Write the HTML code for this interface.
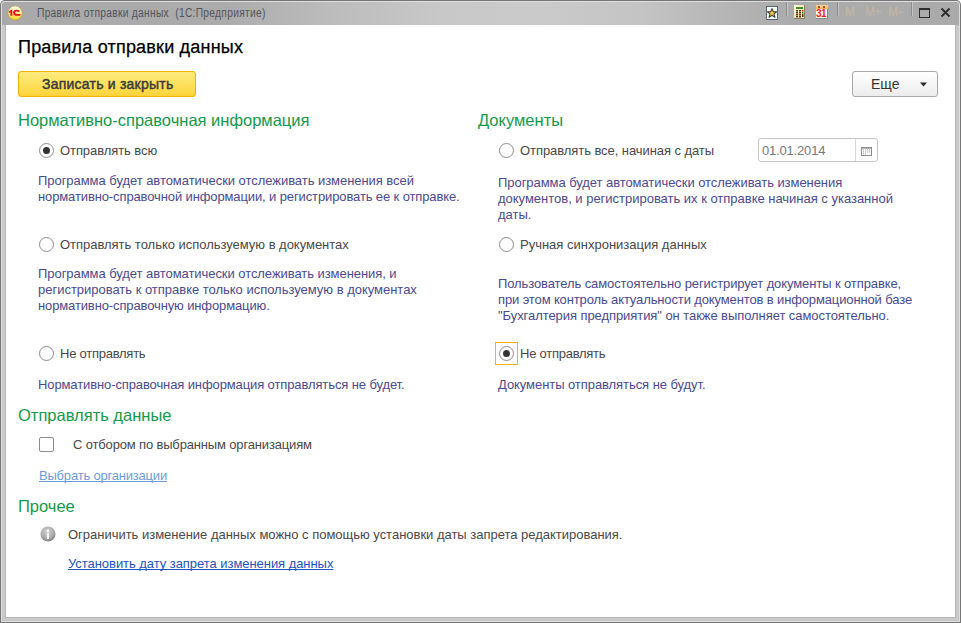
<!DOCTYPE html>
<html><head><meta charset="utf-8">
<style>
*{margin:0;padding:0;box-sizing:border-box}
html,body{width:961px;height:623px;overflow:hidden;background:#fff}
body{position:relative;font-family:"Liberation Sans",sans-serif;}
.a{position:absolute;white-space:pre}
#frame{position:absolute;left:0;top:0;width:961px;height:623px;background:#767676;border-radius:5px 5px 0 0}
#title{position:absolute;left:2px;top:2px;width:957px;height:23px;background:linear-gradient(to right,#a9a9a9 0px,#ababab 220px,#bcbcbc 330px,#c8c8c8 440px,#cacaca 540px,#c4c4c4 640px,#b6b6b6 720px,#ababab 790px,#aaaaaa 957px);border-radius:3px 3px 0 0}
#content{position:absolute;left:6px;top:25px;width:949px;height:592px;background:#fff}
.t13{font-size:13px;line-height:16px;color:#484848}
.desc{font-size:13px;line-height:16px;color:#4a4a8e}
.date{font-size:13px;line-height:16px;color:#777}
.btn{font-size:14px;line-height:16px;color:#3a3a3a;-webkit-text-stroke:0.45px #3a3a3a}
.lnk1{font-size:13px;line-height:16px;text-decoration:underline;text-decoration-skip-ink:none;color:#6f9ad8}
.lnk2{font-size:13px;line-height:16px;text-decoration:underline;text-decoration-skip-ink:none;color:#2553c0}
.hdr{font-size:16.5px;line-height:20px;color:#14994b}
.radio{position:absolute;width:15px;height:15px;border:1px solid #8c8c8c;border-radius:50%;background:#fff}
.radio.on::after{content:"";position:absolute;left:3px;top:3px;width:7px;height:7px;border-radius:50%;background:#333}
</style></head><body>
<div id="frame"></div>
<div class="a" style="left:1px;top:1px;width:959px;height:621px;background:#dedede;border-radius:4px 4px 0 0"></div>
<div class="a" style="left:2px;top:2px;width:957px;height:619px;background:#c9c9c9;border-radius:3px 3px 0 0"></div>
<div class="a" style="left:5px;top:24px;width:951px;height:594px;background:#b6b6b6"></div>
<div id="content"></div>
<div id="title"></div>

<!-- title bar -->
<svg class="a" style="left:7px;top:5px" width="16" height="16" viewBox="0 0 16 16">
<defs><linearGradient id="lg" x1="0" y1="0" x2="0" y2="1"><stop offset="0" stop-color="#fffbe8"/><stop offset="0.45" stop-color="#fff3a0"/><stop offset="1" stop-color="#f2d21a"/></linearGradient></defs>
<circle cx="8.1" cy="8" r="7.2" fill="url(#lg)" stroke="#b89a5a" stroke-width="0.8"/>
<path d="M1.9 6.4 L4.2 4.8 L5.3 4.8 L5.3 10.7 L3.4 10.7 L3.4 7.2 L1.9 8 Z" fill="#e4101c"/>
<path d="M10.4 4.9 C8 4.5 5.9 5.6 6.1 8 C6.3 10 8 10.8 9.8 10.8 L13.4 10.8 L13.4 9 L9.9 9 C8.8 9 8.1 8.6 8.1 7.8 C8.1 6.8 9.2 6.4 10.2 6.6 L11.1 6.9 L12.4 6.9 L12.4 5.3 Z" fill="#e4101c"/>
</svg>
<div class="a" style="left:37px;top:6px;font-size:12px;line-height:15px;color:#54545e;letter-spacing:0.35px;transform:scaleX(0.851);transform-origin:0 0">Правила отправки данных  (1С:Предприятие)</div>

<!-- favorites doc -->
<div class="a" style="left:766px;top:6px;width:12px;height:14px;border:1px solid #56666c;background:#f2fbfb"></div>
<svg class="a" style="left:767px;top:8px" width="10" height="10" viewBox="0 0 10 10"><path d="M5 0.6 L6.3 3.6 L9.5 3.8 L7 5.9 L7.9 9.2 L5 7.4 L2.1 9.2 L3 5.9 L0.5 3.8 L3.7 3.6 Z" fill="#f2c84a" stroke="#3c3c30" stroke-width="1.1" stroke-linejoin="round"/></svg>
<div class="a" style="left:786px;top:2px;width:1px;height:14px;background:#8c8c8c"></div>
<div class="a" style="left:787px;top:2px;width:1px;height:14px;background:#c4c4c4"></div>
<!-- calculator -->
<div class="a" style="left:794px;top:5px;width:11px;height:14px;background:linear-gradient(135deg,#fff6d8,#f3d99c);border-right:1px solid #8a8066;border-bottom:1px solid #8a8066"></div>
<div class="a" style="left:796px;top:7px;width:7px;height:2px;background:#3f8f22"></div>
<svg class="a" style="left:795px;top:9px" width="10" height="9" viewBox="0 0 10 9">
<g fill="#5a3a20"><rect x="1" y="1" width="2" height="1.5"/><rect x="4" y="1" width="2" height="1.5"/><rect x="1" y="3" width="2" height="1.5"/><rect x="4" y="3" width="2" height="1.5"/><rect x="1" y="5" width="2" height="1.5"/><rect x="4" y="5" width="2" height="1.5"/><rect x="1" y="7" width="2" height="1.5"/><rect x="4" y="7" width="2" height="1.5"/><rect x="7" y="5" width="1.5" height="3"/></g>
<rect x="7" y="1" width="1.5" height="1.5" fill="#d82020"/><rect x="7" y="3" width="1.5" height="1.5" fill="#2a8a2a"/></svg>
<!-- calendar -->
<div class="a" style="left:816px;top:5px;width:12px;height:14px;background:#fffaf0;border-right:1px solid #7f8a8a;border-bottom:1px solid #7f8a8a"></div>
<div class="a" style="left:816px;top:5px;width:12px;height:4px;background:linear-gradient(#ffd9a0,#f7a850)"></div>
<div class="a" style="left:818px;top:6px;width:2px;height:2px;background:#6a3a1a;border-radius:1px"></div>
<div class="a" style="left:823px;top:6px;width:2px;height:2px;background:#6a3a1a;border-radius:1px"></div>
<div class="a" style="left:816px;top:8px;font-size:10px;line-height:11px;font-weight:bold;color:#e8231c;letter-spacing:-0.6px">31</div>
<div class="a" style="left:837px;top:2px;width:1px;height:14px;background:#8c8c8c"></div>
<div class="a" style="left:838px;top:2px;width:1px;height:14px;background:#c4c4c4"></div>
<div class="a" style="left:845px;top:6px;font-size:12px;line-height:13px;color:#c2b5a6;-webkit-text-stroke:0.3px #c2b5a6">M</div>
<div class="a" style="left:865px;top:6px;font-size:12px;line-height:13px;color:#c2b5a6;-webkit-text-stroke:0.3px #c2b5a6;letter-spacing:-0.5px">M+</div>
<div class="a" style="left:888px;top:6px;font-size:12px;line-height:13px;color:#c2b5a6;-webkit-text-stroke:0.3px #c2b5a6;letter-spacing:-0.5px">M−</div>
<div class="a" style="left:911px;top:2px;width:1px;height:14px;background:#8c8c8c"></div>
<div class="a" style="left:912px;top:2px;width:1px;height:14px;background:#c4c4c4"></div>
<!-- maximize / close -->
<div class="a" style="left:919px;top:8px;width:11px;height:10px;border:1.5px solid #2e2e2e;border-top-width:2px"></div>
<svg class="a" style="left:940px;top:7px" width="11" height="11" viewBox="0 0 11 11"><path d="M1.5 1.5 L9.5 9.5 M9.5 1.5 L1.5 9.5" stroke="#2e2e2e" stroke-width="2"/></svg>

<!-- heading -->
<div class="a" style="left:18px;top:37px;font-size:18px;line-height:21px;color:#000;letter-spacing:0.2px;-webkit-text-stroke:0.25px #000">Правила отправки данных</div>

<!-- buttons -->
<div class="a" style="left:18px;top:71px;width:178px;height:26px;border:1px solid #f0b400;border-radius:3px;background:linear-gradient(#feeb7e,#fde262 45%,#fcd844 85%,#fad03a)"></div>
<div class="a" style="left:852px;top:71px;width:86px;height:26px;border:1px solid #a9a9a9;border-radius:3px;background:linear-gradient(#ffffff,#ececec)"></div>
<div class="a" style="left:871px;top:76px;font-size:14px;line-height:16px;color:#333">Еще</div>
<svg class="a" style="left:920px;top:82px" width="7" height="5" viewBox="0 0 7 5"><path d="M0 0.5 H7 L3.5 4.5 Z" fill="#2a2a2a"/></svg>

<!-- headers -->
<div class="a hdr" style="left:18px;top:110px">Нормативно-справочная информация</div>
<div class="a hdr" style="left:478px;top:110px">Документы</div>
<div class="a hdr" style="left:18px;top:405px">Отправлять данные</div>
<div class="a hdr" style="left:18px;top:496px">Прочее</div>

<!-- controls -->
<div class="radio on" style="left:39px;top:143px"></div>
<div class="radio" style="left:39px;top:237px"></div>
<div class="radio" style="left:39px;top:346px"></div>
<div class="a" style="left:39px;top:437px;width:15px;height:15px;border:1px solid #8c8c8c;border-radius:2px;background:#fff"></div>
<svg class="a" style="left:40px;top:526px" width="16" height="16" viewBox="0 0 16 16"><defs><radialGradient id="ig" cx="0.45" cy="0.35" r="0.65"><stop offset="0" stop-color="#d4d4d4"/><stop offset="0.7" stop-color="#a8a8a8"/><stop offset="1" stop-color="#7c7c7c"/></radialGradient></defs>
<circle cx="8" cy="8" r="7.5" fill="url(#ig)"/><rect x="6.8" y="3.6" width="2.3" height="2.2" fill="#fff"/><rect x="6.9" y="7.1" width="2.2" height="6" fill="#fff"/></svg>

<div class="radio" style="left:499px;top:143px"></div>
<div class="a" style="left:758px;top:138px;width:120px;height:24px;border:1px solid #c4c4c4;border-radius:3px;background:#fff"></div>
<div class="a" style="left:855px;top:139px;width:1px;height:22px;background:#d8d8d8"></div>
<svg class="a" style="left:861px;top:147px" width="11" height="9" viewBox="0 0 11 9"><rect x="0.5" y="0.5" width="10" height="8" fill="#fff" stroke="#8a8a8a"/><rect x="0" y="0" width="11" height="1.6" fill="#8a8a8a"/>
<g fill="#9a9a9a"><rect x="2" y="2.4" width="1" height="1"/><rect x="4" y="2.4" width="1" height="1"/><rect x="6" y="2.4" width="1" height="1"/><rect x="8" y="2.4" width="1" height="1"/><rect x="2" y="4.4" width="1" height="1"/><rect x="4" y="4.4" width="1" height="1"/><rect x="6" y="4.4" width="1" height="1"/><rect x="8" y="4.4" width="1" height="1"/><rect x="2" y="6.4" width="1" height="1"/><rect x="4" y="6.4" width="1" height="1"/></g></svg>
<div class="radio" style="left:499px;top:237px"></div>
<div class="a" style="left:495px;top:342px;width:23px;height:23px;border:1px solid #f5b400"></div>
<div class="radio on" style="left:499px;top:346px"></div>

<div class="a t13" id="l1" style="left:60px;top:143px;letter-spacing:-0.077px">Отправлять всю</div>
<div class="a desc" id="l2" style="left:38px;top:173px;letter-spacing:-0.046px">Программа будет автоматически отслеживать изменения всей</div>
<div class="a desc" id="l3" style="left:38px;top:189px;letter-spacing:-0.118px">нормативно-справочной информации, и регистрировать ее к отправке.</div>
<div class="a t13" id="l4" style="left:60px;top:237px;letter-spacing:-0.024px">Отправлять только используемую в документах</div>
<div class="a desc" id="l5" style="left:38px;top:266px;letter-spacing:-0.057px">Программа будет автоматически отслеживать изменения, и</div>
<div class="a desc" id="l6" style="left:38px;top:282px;letter-spacing:-0.017px">регистрировать к отправке только используемую в документах</div>
<div class="a desc" id="l7" style="left:38px;top:298px;letter-spacing:-0.124px">нормативно-справочную информацию.</div>
<div class="a t13" id="l8" style="left:60px;top:346px;letter-spacing:-0.246px">Не отправлять</div>
<div class="a desc" id="l9" style="left:38px;top:377px;letter-spacing:-0.110px">Нормативно-справочная информация отправляться не будет.</div>
<div class="a t13" id="l10" style="left:73px;top:437px;letter-spacing:-0.158px">С отбором по выбранным организациям</div>
<div class="a lnk1" id="l11" style="left:39px;top:468px;letter-spacing:-0.197px">Выбрать организации</div>
<div class="a t13" id="l12" style="left:68px;top:527px;letter-spacing:-0.015px">Ограничить изменение данных можно с помощью установки даты запрета редактирования.</div>
<div class="a lnk2" id="l13" style="left:68px;top:556px;letter-spacing:-0.051px">Установить дату запрета изменения данных</div>
<div class="a t13" id="r1" style="left:520px;top:143px;letter-spacing:-0.067px">Отправлять все, начиная с даты</div>
<div class="a desc" id="r2" style="left:498px;top:175px;letter-spacing:-0.059px">Программа будет автоматически отслеживать изменения</div>
<div class="a desc" id="r3" style="left:498px;top:191px;letter-spacing:-0.016px">документов, и регистрировать их к отправке начиная с указанной</div>
<div class="a desc" id="r4" style="left:498px;top:207px;letter-spacing:-0.000px">даты.</div>
<div class="a t13" id="r5" style="left:520px;top:237px;letter-spacing:-0.002px">Ручная синхронизация данных</div>
<div class="a desc" id="r6" style="left:498px;top:276px;letter-spacing:-0.098px">Пользователь самостоятельно регистрирует документы к отправке,</div>
<div class="a desc" id="r7" style="left:498px;top:292px;letter-spacing:-0.129px">при этом контроль актуальности документов в информационной базе</div>
<div class="a desc" id="r8" style="left:498px;top:308px;letter-spacing:-0.067px">"Бухгалтерия предприятия" он также выполняет самостоятельно.</div>
<div class="a t13" id="r9" style="left:520px;top:346px;letter-spacing:-0.250px">Не отправлять</div>
<div class="a desc" id="r10" style="left:498px;top:377px;letter-spacing:-0.065px">Документы отправляться не будут.</div>
<div class="a date" id="d1" style="left:762px;top:143px;letter-spacing:-0.182px">01.01.2014</div>
<div class="a btn" id="b1" style="left:42px;top:76px;letter-spacing:0.229px">Записать и закрыть</div>
</body></html>
